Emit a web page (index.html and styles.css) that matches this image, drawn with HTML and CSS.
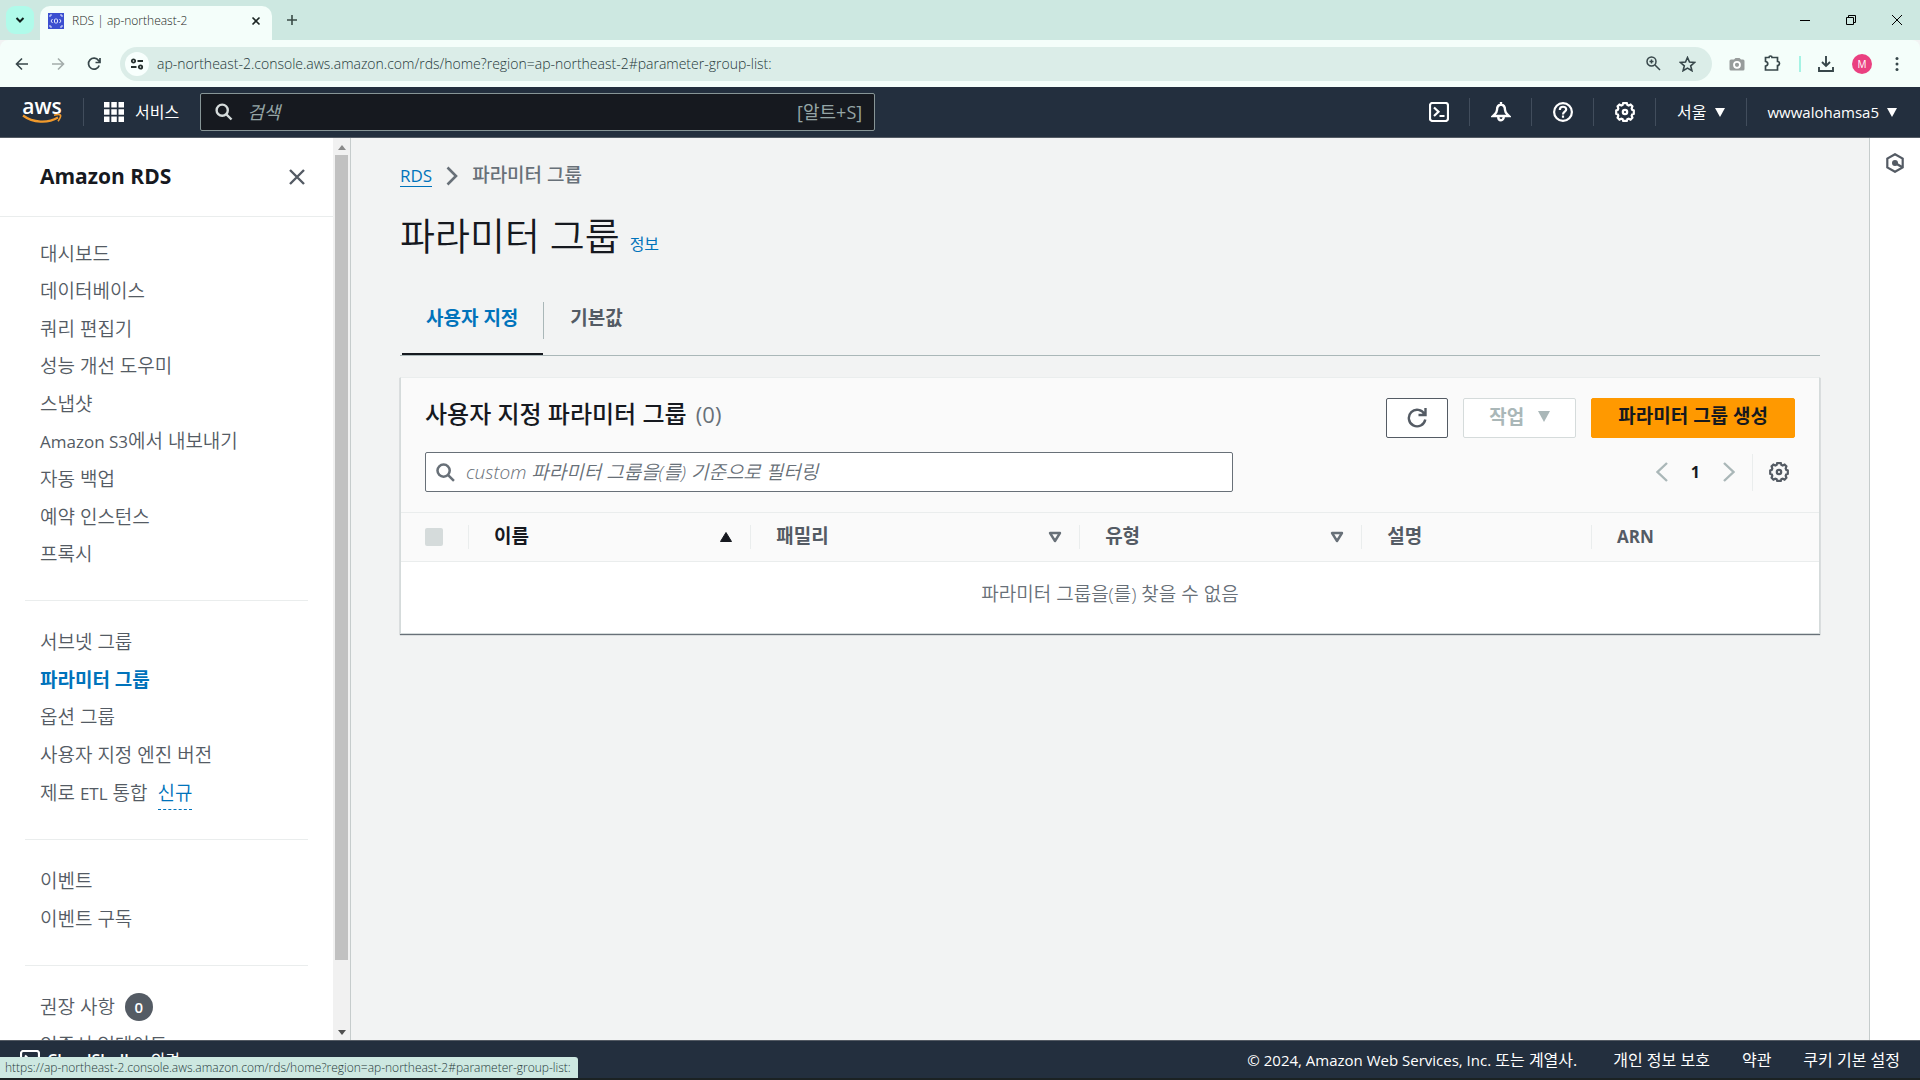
FILE: index.html
```html
<!DOCTYPE html>
<html lang="ko">
<head>
<meta charset="utf-8">
<title>RDS | ap-northeast-2</title>
<link rel="stylesheet" href="styles.css">
</head>
<body>
<div class="tabstrip">
  <button class="tab-search" aria-label="탭 검색"><svg width="12" height="12" viewBox="0 0 12 12"><path d="M2.500 4 6 7.500 9.500 4" fill="none" stroke="#10201d" stroke-width="2"/></svg></button>
  <div class="tab">
    <svg width="16" height="16" viewBox="0 0 16 16"><rect width="16" height="16" fill="#3b4fd0"/><g fill="none" stroke="#dfe4ff"><path d="M2 4V2h2M12 2h2v2M14 12v2h-2M4 14H2v-2M4.500 6 3 8l1.500 2M11.500 6 13 8l-1.500 2"/><rect x="6.500" y="6" width="3" height="4" rx="1"/></g></svg>
    <span class="tab-title">RDS | ap-northeast-2</span>
    <button class="plain" aria-label="탭 닫기"><svg width="10" height="10" viewBox="0 0 10 10"><path d="m1.500 1.500 7 7m0-7-7 7" stroke="#1c2624" stroke-width="1.600"/></svg></button>
  </div>
  <button class="plain new-tab" aria-label="새 탭"><svg width="12" height="12" viewBox="0 0 12 12"><path d="M6 1v10M1 6h10" stroke="#3a4a46" stroke-width="1.600"/></svg></button>
  <div class="window-controls">
    <button class="plain" aria-label="최소화"><svg width="10" height="10" viewBox="0 0 10 10"><path d="M0 5.500h10" stroke="#000"/></svg></button>
    <button class="plain" aria-label="이전 크기로"><svg width="10" height="10" viewBox="0 0 10 10"><path d="M.5 2.500h7v7h-7zM2.500 2.500v-2h7v7h-2" fill="none" stroke="#000"/></svg></button>
    <button class="plain" aria-label="닫기"><svg width="10" height="10" viewBox="0 0 10 10"><path d="m0 0 10 10M10 0 0 10" stroke="#000"/></svg></button>
  </div>
</div>

<div class="toolbar">
  <button class="plain nav-btn" aria-label="뒤로"><svg width="14" height="14" viewBox="0 0 14 14"><path d="M13 7H2M7 1.500 1.500 7 7 12.500" fill="none" stroke="#37474a" stroke-width="1.600"/></svg></button>
  <button class="plain nav-btn" aria-label="앞으로"><svg width="14" height="14" viewBox="0 0 14 14"><path d="M1 7h11M7 1.500 12.500 7 7 12.500" fill="none" stroke="#a3adab" stroke-width="1.600"/></svg></button>
  <button class="plain nav-btn" aria-label="새로고침"><svg width="14" height="14" viewBox="0 0 14 14"><path d="M12.200 8.500A5.500 5.500 0 1 1 11.500 3.500L13 5M13 1v4.500H8.500" fill="none" stroke="#37474a" stroke-width="1.700"/></svg></button>
  <div class="omnibox">
    <button class="site-info" aria-label="사이트 정보"><svg width="14" height="12" viewBox="0 0 14 12"><g fill="none" stroke="#26302e" stroke-width="1.800"><circle cx="3.500" cy="3" r="1.700"/><path d="M7.500 3H13M1 9h5.500"/><circle cx="10.500" cy="9" r="1.700"/></g></svg></button>
    <input class="url" type="text" aria-label="주소창" value="ap-northeast-2.console.aws.amazon.com/rds/home?region=ap-northeast-2#parameter-group-list:">
    <button class="plain" aria-label="확대"><svg width="15" height="15" viewBox="0 0 15 15"><g fill="none" stroke="#37474a" stroke-width="1.500"><circle cx="5.500" cy="5.500" r="4.500"/><path d="m9 9 5 5M5.500 3.500v4M3.500 5.500h4"/></g></svg></button>
    <button class="plain" aria-label="북마크"><svg width="17" height="16" viewBox="0 0 17 16"><path d="m8.500 1.500 2 4.600 5 .4-3.800 3.300 1.200 4.900-4.400-2.600-4.400 2.600 1.200-4.900L1.500 6.500l5-.4z" fill="none" stroke="#37474a" stroke-width="1.600"/></svg></button>
  </div>
  <div class="extensions">
    <button class="plain" aria-label="캡처"><svg width="16" height="14" viewBox="0 0 16 14"><path d="M2 2.500h3L6.500 1h4L12 2.500h2a1.500 1.500 0 0 1 1.500 1.500v8a1.500 1.500 0 0 1-1.500 1.500H2A1.500 1.500 0 0 1 .5 12V4A1.500 1.500 0 0 1 2 2.500z" fill="#979c9b"/><circle cx="8" cy="7.800" r="3" fill="none" stroke="#fff" stroke-width="1.800"/></svg></button>
    <button class="plain" aria-label="확장 프로그램"><svg width="17" height="17" viewBox="0 0 17 17"><path d="M1.500 2.500H5a1.500 1.500 0 0 1 3 0h5.500v4a1.900 1.900 0 0 1 0 4V15H1.500v-3.800C4.500 10.500 4.500 7 1.500 6.300z" fill="none" stroke="#37474a" stroke-width="1.700"/></svg></button>
    <span class="ext-line"></span>
    <button class="plain" aria-label="다운로드"><svg width="16" height="16" viewBox="0 0 16 16"><path d="M8 0v9.500M4 6l4 4 4-4M1 11v4h14v-4" fill="none" stroke="#37474a" stroke-width="1.900"/></svg></button>
    <button class="avatar" aria-label="프로필">M</button>
    <button class="plain" aria-label="메뉴"><svg width="16" height="16" viewBox="0 0 16 16"><g fill="#37474a"><circle cx="8" cy="2.500" r="1.500"/><circle cx="8" cy="8" r="1.500"/><circle cx="8" cy="13.500" r="1.500"/></g></svg></button>
  </div>
</div>

<header class="aws-bar">
  <a class="aws-logo" href="#" aria-label="AWS"><span>aws</span><svg width="40" height="10" viewBox="0 0 40 10"><path d="M1 1.500C11 9 26 9.500 36 3.500" fill="none" stroke="#f19a2c" stroke-width="2.200"/><path d="M32 1.200c3-.7 6-.7 6.500 0s-.4 3.600-2.500 6" fill="none" stroke="#f19a2c" stroke-width="1.600"/></svg></a>
  <span class="bar-line"></span>
  <button class="services"><svg width="20" height="20" viewBox="0 0 20 20"><path fill="#fff" d="M0 0h5.500v5.500H0zM7.300 0h5.500v5.500H7.300zM14.500 0H20v5.500h-5.500zM0 7.300h5.500v5.500H0zM7.300 7.300h5.500v5.500H7.300zM14.500 7.300H20v5.500h-5.500zM0 14.500h5.500V20H0zM7.300 14.500h5.500V20H7.300zM14.500 14.500H20V20h-5.500z"/></svg>서비스</button>
  <label class="aws-search"><svg width="18" height="18" viewBox="0 0 18 18"><g fill="none" stroke="#d5dbdb" stroke-width="2.400"><circle cx="7.200" cy="7.200" r="5.600"/><path d="m11.500 11.500 5 5"/></g></svg><input type="text" placeholder="검색" aria-label="검색"><span>[알트+S]</span></label>
  <div class="aws-tools">
    <button class="icon" aria-label="CloudShell"><svg width="20" height="20" viewBox="0 0 20 20"><g fill="none" stroke="#fff" stroke-width="2.200"><rect x="1" y="1" width="18" height="18" rx="2.500"/><path d="m5 5.500 4.500 4.200L5 14M10.500 14h5"/></g></svg></button>
    <button class="icon" aria-label="알림"><svg width="20" height="20" viewBox="0 0 20 20"><g fill="none" stroke="#fff" stroke-width="2.400"><path d="M10 2.500C7 3 6 5 6 8c0 3-2.500 4.500-4 6h16c-1.500-1.500-4-3-4-6 0-3-1-5-4-5.500zM10 0v3M7.200 14.500c0 5 5.600 5 5.600 0"/></g></svg></button>
    <button class="icon" aria-label="도움말"><svg width="20" height="20" viewBox="0 0 20 20"><g fill="none" stroke="#fff" stroke-width="2.200"><circle cx="10" cy="10" r="8.900"/><path d="M6.800 8c0-4.400 6.400-4 6.400-.6 0 2.200-3.200 2.300-3.200 5M10 13.500v2.300"/></g></svg></button>
    <button class="icon" aria-label="설정"><svg width="20" height="20" viewBox="0 0 20 20"><g fill="none" stroke="#fff" stroke-width="2.200"><path d="M8.200 1.200h3.600l.6 1.800 1.300.5 1.900-.9 1.800 1.800-.7 2.100.5 1.300 1.600.6v3.400l-1.600.6-.5 1.300.7 2.100-1.800 1.800-1.900-.9-1.300.5-.6 1.600H8.200l-.6-1.600-1.300-.5-1.900.9-1.800-1.800.7-2.100-.5-1.300-1.600-.6V8.400l1.600-.6.500-1.300-.7-2.100 1.800-1.800 1.900.9L7.600 3z"/><circle cx="10" cy="10" r="2.200"/></g></svg></button>
    <button>서울<i class="caret"></i></button>
    <button><b>wwwalohamsa5</b><i class="caret"></i></button>
  </div>
</header>

<div class="workspace">
  <aside class="sidebar">
    <div class="side-head"><h2>Amazon RDS</h2><button class="plain" aria-label="탐색 닫기"><svg width="16" height="16" viewBox="0 0 16 16"><path d="m1 1 14 14M15 1 1 15" stroke="#545b64" stroke-width="2.400"/></svg></button></div>
    <nav>
      <ul class="nine">
        <li><a href="#">대시보드</a></li><li><a href="#">데이터베이스</a></li><li><a href="#">쿼리 편집기</a></li><li><a href="#">성능 개선 도우미</a></li><li><a href="#">스냅샷</a></li><li><a href="#"><span class="latin">Amazon S3</span>에서 내보내기</a></li><li><a href="#">자동 백업</a></li><li><a href="#">예약 인스턴스</a></li><li><a href="#">프록시</a></li>
      </ul>
      <ul class="five">
        <li><a href="#">서브넷 그룹</a></li><li><a class="current" href="#">파라미터 그룹</a></li><li><a href="#">옵션 그룹</a></li><li><a href="#">사용자 지정 엔진 버전</a></li><li><a href="#">제로 <span class="latin">ETL</span> 통합</a><a class="new" href="#">신규</a></li>
      </ul>
      <ul class="two">
        <li><a href="#">이벤트</a></li><li><a href="#">이벤트 구독</a></li>
      </ul>
      <ul class="two">
        <li><a href="#">권장 사항</a><span class="count">0</span></li><li><a href="#">인증서 업데이트</a></li>
      </ul>
    </nav>
  </aside>
  <div class="scrollbar" aria-hidden="true"><i class="up"></i><i class="thumb"></i><i class="down"></i></div>

  <main>
    <div class="crumbs"><a href="#">RDS</a><svg width="12" height="20" viewBox="0 0 12 20"><path d="m1.500 1.500 8.500 8.500-8.500 8.500" fill="none" stroke="#687078" stroke-width="2.600"/></svg><b>파라미터 그룹</b></div>
    <div class="title"><h1>파라미터 그룹</h1><a href="#">정보</a></div>
    <div class="tabs" role="tablist"><button class="active" role="tab" aria-selected="true">사용자 지정</button><button role="tab" aria-selected="false">기본값</button></div>

    <section class="card">
      <div class="card-top">
        <h2>사용자 지정 파라미터 그룹 <span>(0)</span></h2>
        <button class="btn refresh" aria-label="새로 고침"><svg width="20" height="20" viewBox="0 0 20 20"><path d="M18.300 11.500A8.300 8.300 0 1 1 17.500 6.200M18.500 0v7H11.500" fill="none" stroke="#545b64" stroke-width="2.400"/></svg></button>
        <button class="btn disabled" disabled>작업<i class="caret"></i></button>
        <button class="btn primary">파라미터 그룹 생성</button>
      </div>
      <div class="card-filter">
        <label class="filter"><svg width="19" height="19" viewBox="0 0 18 18"><g fill="none" stroke="#687078" stroke-width="2.400"><circle cx="7.200" cy="7.200" r="5.800"/><path d="m11.500 11.500 5.500 5.500"/></g></svg><input type="text" placeholder="custom 파라미터 그룹을(를) 기준으로 필터링" aria-label="필터"></label>
        <div class="pager">
          <button class="plain" aria-label="이전 페이지"><svg width="12" height="20" viewBox="0 0 12 20"><path d="M11 1 1.500 10l9.500 9" fill="none" stroke="#aab7b8" stroke-width="2.400"/></svg></button>
          <b>1</b>
          <button class="plain" aria-label="다음 페이지"><svg width="12" height="20" viewBox="0 0 12 20"><path d="m1 1 9.500 9L1 19" fill="none" stroke="#aab7b8" stroke-width="2.400"/></svg></button>
          <button class="plain prefs" aria-label="기본 설정"><svg width="20" height="20" viewBox="0 0 20 20"><g fill="none" stroke="#545b64" stroke-width="2.200"><path d="M8.200 1.200h3.600l.6 1.800 1.300.5 1.900-.9 1.800 1.800-.7 2.100.5 1.300 1.600.6v3.400l-1.600.6-.5 1.300.7 2.100-1.800 1.800-1.900-.9-1.300.5-.6 1.600H8.200l-.6-1.600-1.300-.5-1.900.9-1.800-1.800.7-2.100-.5-1.300-1.600-.6V8.400l1.600-.6.500-1.300-.7-2.100 1.800-1.800 1.900.9L7.600 3z"/><circle cx="10" cy="10" r="2.200"/></g></svg></button>
        </div>
      </div>
      <table>
        <colgroup><col class="c-check"><col class="c-name"><col class="c-family"><col class="c-type"><col class="c-desc"><col></colgroup>
        <thead><tr>
          <th><div><input type="checkbox" disabled aria-label="모두 선택"></div></th>
          <th class="sorted"><div><span>이름</span><svg width="14" height="12" viewBox="0 0 14 12"><path d="M7 1.500 12.500 10.500h-11z" fill="#16191f" stroke="#16191f" stroke-linejoin="round"/></svg></div></th>
          <th><div><span>패밀리</span><svg width="14" height="12" viewBox="0 0 14 12"><path d="M2 2h10L7 10z" fill="none" stroke="#687078" stroke-width="2.400" stroke-linejoin="round"/></svg></div></th>
          <th><div><span>유형</span><svg width="14" height="12" viewBox="0 0 14 12"><path d="M2 2h10L7 10z" fill="none" stroke="#687078" stroke-width="2.400" stroke-linejoin="round"/></svg></div></th>
          <th><div><span>설명</span></div></th>
          <th><div class="arn">ARN</div></th>
        </tr></thead>
        <tbody><tr><td colspan="6">파라미터 그룹을(를) 찾을 수 없음</td></tr></tbody>
      </table>
    </section>
  </main>

  <aside class="rail"><button class="plain" aria-label="도움말 패널"><svg width="20" height="20" viewBox="0 0 20 20"><path d="m10 1.200 7.700 4.400v8.800L10 18.800l-7.700-4.400V5.600z" fill="none" stroke="#545b64" stroke-width="2.200"/><circle cx="10" cy="10" r="3" fill="#545b64"/><path d="m10 10 7 4" stroke="#545b64" stroke-width="2.400"/></svg></button></aside>
</div>

<footer class="footer">
  <button class="shell"><svg width="20" height="20" viewBox="0 0 20 20"><g fill="none" stroke="#fff" stroke-width="2.200"><rect x="1" y="1" width="18" height="18" rx="2.500"/><path d="m5 5.500 4.500 4.200L5 14M10.500 14h5"/></g></svg><b>CloudShell</b></button>
  <a class="feedback" href="#">의견</a>
  <span class="copy"><b>© 2024, Amazon Web Services, Inc.</b> 또는 계열사.</span>
  <a href="#">개인 정보 보호</a><a href="#">약관</a><a href="#">쿠키 기본 설정</a>
</footer>
<div class="taskbar-edge"></div>
<div class="status">https://ap-northeast-2.console.aws.amazon.com/rds/home?region=ap-northeast-2#parameter-group-list:</div>
</body>
</html>
```

FILE: styles.css
```css
* { box-sizing: border-box; }
body {
  margin: 0;
  height: 100vh;
  display: flex;
  flex-direction: column;
  overflow: hidden;
  background: #f2f3f3;
  color: #545b64;
  font: 19px/28px "Open Sans", "Noto Sans CJK KR", sans-serif;
}
button, input { font: inherit; color: inherit; }
button { cursor: pointer; margin: 0; }
a { color: inherit; text-decoration: none; }
h1, h2, ul { margin: 0; padding: 0; }
svg { display: block; flex: none; }
.latin { font-size: 17px; font-weight: 400; }
.plain { display: flex; align-items: center; justify-content: center; padding: 0; border: 0; background: none; }

/* browser frame */
.tabstrip { flex: none; display: flex; align-items: flex-start; height: 40px; padding-left: 6px; background: #cde8e1; color: #1c2624; }
.tab-search { width: 28px; height: 28px; margin-top: 6px; padding: 0; display: flex; align-items: center; justify-content: center; border: 0; border-radius: 9px; background: #b0fbea; }
.tab { width: 232px; height: 34px; margin: 6px 0 0 6px; padding: 0 11px 4px 8px; display: flex; align-items: center; gap: 8px; border-radius: 10px 10px 0 0; background: #f4fefa; font-size: 12px; font-weight: 350; line-height: 16px; }
.tab-title { flex: 1; }
.new-tab { width: 28px; height: 28px; margin: 6px 0 0 6px; }
.window-controls { display: flex; margin-left: auto; }
.window-controls button { width: 46px; height: 40px; }
.toolbar { flex: none; display: flex; align-items: center; height: 47px; background: #f4fefa; border-radius: 8px 8px 0 0; }
.nav-btn { width: 36px; height: 34px; }
.nav-btn:first-child { margin-left: 4px; }
.omnibox { flex: 1; height: 34px; margin-left: 8px; padding: 0 16px 0 5px; display: flex; align-items: center; gap: 18px; border-radius: 17px; background: #dbede8; }
.site-info { width: 24px; height: 24px; padding: 0; display: flex; align-items: center; justify-content: center; border: 0; border-radius: 50%; background: #f8fffd; }
.url { flex: 1; min-width: 0; margin-left: -10px; padding: 0; border: 0; background: none; color: #26383a; font-size: 14px; font-weight: 350; line-height: 20px; }
.extensions { display: flex; align-items: center; gap: 17px; padding: 0 14px 0 17px; }
.extensions :first-child { margin-right: 1px; }
.ext-line { width: 2px; height: 16px; background: #a5f3e4; }
.avatar { width: 20px; height: 20px; padding: 0; border: 0; border-radius: 50%; background: #ea4080; color: #fff; font-size: 10px; line-height: 20px; }

/* console header */
.aws-bar { flex: none; display: flex; align-items: center; height: 51px; padding-left: 22px; background: #232f3e; border-bottom: 1px solid #545b64; color: #fff; font-size: 16px; }
.aws-logo { width: 40px; color: #fff; font-size: 21px; font-weight: 600; line-height: 16px; text-align: center; }
.aws-logo span { display: block; }
.aws-logo svg { margin-bottom: 2px; }
.bar-line { width: 1px; height: 28px; margin-left: 21px; background: #414d5c; }
.services { display: flex; align-items: center; gap: 11px; margin-left: 20px; padding: 0; border: 0; background: none; }
.aws-search { flex: none; width: 36%; max-width: 675px; height: 38px; margin-left: 21px; padding: 0 12px 0 14px; display: flex; align-items: center; gap: 14px; border: 1px solid #879596; border-radius: 2px; background: #16191f; color: #95a5a6; font-size: 18px; }
.aws-search input { flex: 1; min-width: 0; padding: 0; border: 0; background: none; }
.aws-search input::placeholder { color: #95a5a6; font-style: italic; opacity: 1; }
.aws-tools { display: flex; margin-left: auto; }
.aws-tools button { display: flex; align-items: center; gap: 8px; height: 28px; padding: 0 21px; border: 0; border-left: 1px solid #414d5c; background: none; }
.aws-tools .icon { padding: 0 20px 0 21px; }
.aws-tools button:first-child { border: 0; }
.aws-tools button:last-child { padding-right: 23px; }
.aws-tools b { font-size: 15px; font-weight: 500; }
.caret { border: 5px solid transparent; border-top: 9px solid; border-bottom: 0; }

/* workspace */
.workspace { flex: 1; min-height: 0; display: flex; }
.sidebar { flex: none; width: 333px; overflow: hidden; background: #fff; }
.side-head { display: flex; align-items: center; justify-content: space-between; height: 79px; padding: 0 28px 0 40px; border-bottom: 1px solid #eaeded; }
.side-head h2 { padding-bottom: 2px; color: #16191f; font-size: 21px; font-weight: 700; }
.sidebar nav { padding-top: 18px; }
.sidebar ul { list-style: none; display: grid; grid-auto-rows: 1fr; margin: 0 25px; padding: 0 15px; }
.sidebar ul + ul { margin-top: 27px; padding-top: 22px; border-top: 1px solid #eaeded; }
.sidebar li { display: flex; align-items: center; font-weight: 350; white-space: nowrap; }
.nine { min-height: 338px; }
.five { min-height: 212px; }
.two { min-height: 99px; }
.current { color: #0073bb; font-weight: 700; }
.new { margin-left: 10px; color: #0073bb; border-bottom: 1px dashed #0073bb; line-height: 32px; }
.count { width: 28px; height: 28px; margin-left: 10px; border-radius: 50%; background: #545b64; color: #fff; font-size: 15px; font-weight: 600; text-align: center; }
.scrollbar { flex: none; width: 18px; padding: 7px 2px 5px; display: flex; flex-direction: column; align-items: center; background: #f1f1f1; border-right: 1px solid #c6cccc; }
.up { border: 4px solid transparent; border-bottom: 5px solid #8a8a8a; border-top: 0; }
.thumb { flex: 1; width: 13px; margin: 5px 0 70px; background: #c1c1c1; }
.down { border: 4px solid transparent; border-top: 5px solid #505050; border-bottom: 0; }
main { flex: 1; min-width: 0; padding: 22px 49px; }
.rail { flex: none; width: 51px; padding-top: 15px; display: flex; justify-content: center; align-items: flex-start; background: #fff; border-left: 1px solid #c6cccc; }

.crumbs { display: flex; align-items: center; gap: 14px; height: 32px; color: #687078; }
.crumbs a { color: #0073bb; font-size: 17px; line-height: 20px; border-bottom: 1px solid #0073bb; }
.crumbs b { padding-bottom: 2px; font-weight: 500; }
.title { display: flex; align-items: baseline; gap: 10px; height: 56px; margin-top: 15px; color: #16191f; }
h1 { font-size: 38px; font-weight: 350; line-height: 56px; }
.title a { color: #0073bb; font-size: 16px; }
.tabs { display: flex; height: 75px; margin-top: 18px; padding: 21px 0 0 2px; border-bottom: 1px solid #aab7b8; align-items: stretch; }
.tabs button { display: flex; align-items: flex-start; padding: 2px 25px 0 24px; border: 0; background: none; font-weight: 700; }
.tabs .active { color: #0073bb; border-bottom: 2px solid #16191f; }
.tabs button + button::before { content: ""; width: 1px; height: 37px; margin: -2px 26px 0 -24px; background: #aab7b8; }

.card { margin-top: 21px; background: #fff; border: 1px solid #d5dbdb; border-top-color: #eaeded; box-shadow: 0 1px 1px #687078; }
.card-top, .card-filter { display: flex; align-items: center; padding: 0 24px; background: #fafafa; }
.card-top { padding-top: 19px; gap: 15px; }
.card h2 { flex: 1; padding-bottom: 7px; color: #16191f; font-size: 24px; font-weight: 500; line-height: 34px; }
.card h2 span { margin-left: 3px; color: #687078; font-size: 22px; font-weight: 400; }
.btn { display: flex; align-items: center; justify-content: center; height: 40px; padding: 0 26px 4px; border: 1px solid #545b64; border-radius: 2px; background: #fff; font-weight: 700; }
.refresh { padding: 0 20px; }
.disabled { gap: 14px; padding: 0 25px 2px; border-color: #d5dbdb; color: #aab7b8; }
.disabled .caret { border-width: 11px 6px 0; }
.primary { border-color: #ff9900; background: #ff9900; color: #16191f; }
.card-filter { justify-content: space-between; padding-top: 14px; padding-bottom: 20px; }
.filter { width: 59%; height: 40px; padding: 0 10px; display: flex; align-items: center; gap: 11px; border: 1px solid #687078; border-radius: 2px; background: #fff; }
.filter input { flex: 1; min-width: 0; padding: 0; border: 0; outline: 0; background: none; }
.filter input::placeholder { color: #687078; font-style: italic; font-weight: 350; opacity: 1; }
.pager { display: flex; align-items: center; gap: 23px; color: #16191f; font-size: 16px; }
.prefs { height: 37px; margin-left: -6px; padding: 0 6px 0 16px; border-left: 1px solid #eaeded; }
table { width: 100%; table-layout: fixed; border-collapse: collapse; }
.c-check { width: 68px; }
.c-name, .c-type { width: 19.9%; }
.c-family { width: 23.2%; }
.c-desc { width: 16.2%; }
th { height: 49px; padding: 0; background: #fafafa; border-top: 1px solid #eaeded; border-bottom: 1px solid #eaeded; text-align: left; }
th div { display: flex; align-items: center; justify-content: space-between; height: 24px; padding: 0 17px 0 25px; border-right: 1px solid #eaeded; }
th div:has(input) { padding-left: 24px; }
th span { padding-bottom: 3px; }
.arn { border: 0; font-size: 17px; font-weight: 700; }
.sorted { color: #16191f; }
th input { appearance: none; width: 18px; height: 18px; margin: 0; border-radius: 2px; background: #d5dbdb; }
td { height: 71px; padding: 0 0 7px; color: #687078; text-align: center; font-weight: 350; }

/* footer */
.footer { flex: none; display: flex; align-items: center; height: 38px; padding: 0 20px; background: #232f3e; border-top: 1px solid #545b64; color: #fff; font-size: 16px; white-space: nowrap; }
.footer b { font-size: 15px; font-weight: 500; }
.shell { display: flex; align-items: center; gap: 7px; padding: 0; border: 0; background: none; }
.footer .shell b { font-size: 16px; font-weight: 600; }
.feedback { margin-left: 22px; }
.copy { margin-left: auto; }
.copy ~ a { margin-left: 32px; }
.copy + a { margin-left: 36px; }
.taskbar-edge { flex: none; height: 2px; background: #1b2223; }
.status { position: absolute; left: 0; bottom: 2px; height: 21px; padding: 0 7px 0 5px; background: #cde8e1; border-radius: 0 3px 0 0; color: #26383a; font-size: 12px; font-weight: 350; line-height: 21px; }
```
